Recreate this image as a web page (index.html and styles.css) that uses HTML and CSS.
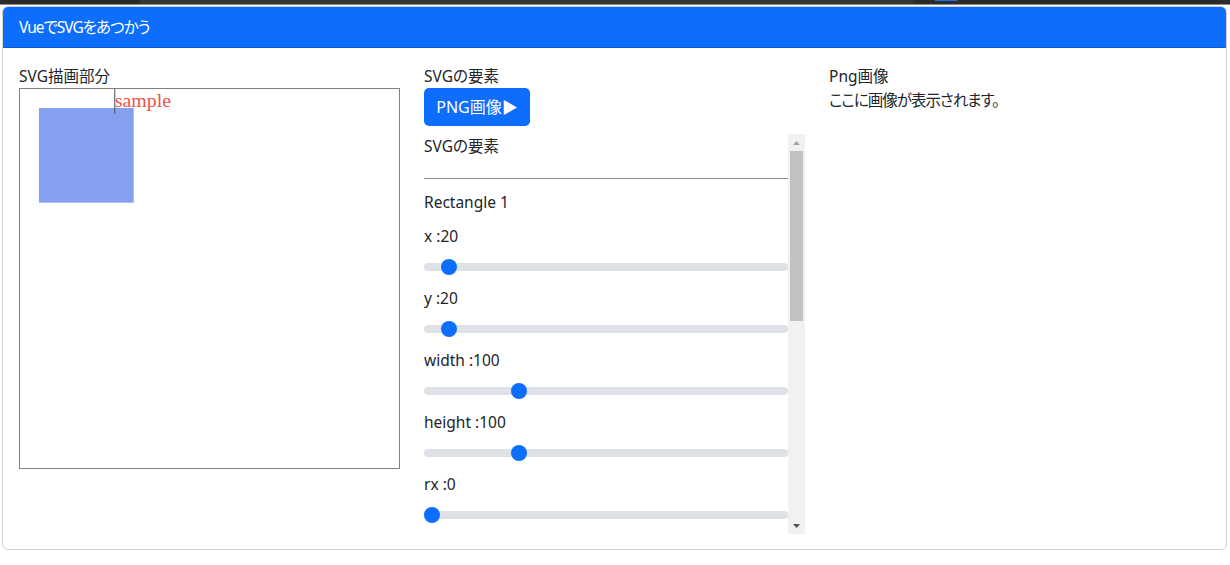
FILE: index.html
```html
<!DOCTYPE html>
<html lang="ja">
<head>
<meta charset="utf-8">
<title>VueでSVGをあつかう</title>
<link rel="stylesheet" href="styles.css">
</head>
<body>
<div class="topbar"><span class="tb-light"></span><span class="tb-blue"></span></div>
<div class="card">
  <div class="card-header">VueでSVGをあつかう</div>
  <div class="card-body">
    <div class="row">
      <div class="col">
        <div class="label">SVG描画部分</div>
        <svg class="canvas" viewBox="0 0 400 400" xmlns="http://www.w3.org/2000/svg">
          <rect x="20" y="20" width="100" height="100" fill="#86a0f0"/>
          <line x1="100" y1="0" x2="100" y2="26" stroke="#444" stroke-width="1"/>
          <text x="100" y="19" class="svgtext">sample</text>
        </svg>
      </div>
      <div class="col">
        <div class="label">SVGの要素</div>
        <button class="btn">PNG画像▶</button>
        <div class="scrollwrap">
          <div class="scroller">
            <div class="sc-title">SVGの要素</div>
            <hr class="sep">
            <div class="group-title">Rectangle 1</div>
            <div class="ctl"><div class="ctl-label">x :20</div><input class="range" type="range" min="0" max="400" value="20"></div>
            <div class="ctl"><div class="ctl-label">y :20</div><input class="range" type="range" min="0" max="400" value="20"></div>
            <div class="ctl"><div class="ctl-label">width :100</div><input class="range" type="range" min="0" max="400" value="100"></div>
            <div class="ctl"><div class="ctl-label">height :100</div><input class="range" type="range" min="0" max="400" value="100"></div>
            <div class="ctl"><div class="ctl-label">rx :0</div><input class="range" type="range" min="0" max="400" value="0"></div>
          </div>
          <div class="vscroll">
            <div class="sb-btn">
              <svg width="7" height="4" viewBox="0 0 7 4"><polygon points="0,4 7,4 3.5,0" fill="#a3a3a3"/></svg>
            </div>
            <div class="sb-track"><div class="sb-thumb"></div></div>
            <div class="sb-btn">
              <svg width="7" height="4" viewBox="0 0 7 4"><polygon points="0,0 7,0 3.5,4" fill="#505050"/></svg>
            </div>
          </div>
        </div>
      </div>
      <div class="col">
        <div class="label">Png画像</div>
        <div class="label kana">ここに画像が表示されます。</div>
      </div>
    </div>
  </div>
</div>
</body>
</html>
```
FILE: styles.css
```css
* { box-sizing: border-box; }
html, body { margin: 0; padding: 0; background: #fff; }
body {
  font-family: "Noto Sans", "Noto Sans CJK JP", sans-serif;
  font-feature-settings: "palt";
  font-size: 16px;
  line-height: 24px;
  color: #212529;
  width: 1230px;
  height: 565px;
  overflow: hidden;
}
.topbar {
  height: 5px;
  background: #2b2b2b;
  position: relative;
  border-bottom: 1px solid #8a8a8a;
  margin-bottom: 1px;
}
.tb-light {
  position: absolute; left: 140px; top: 0; width: 773px; height: 4px; background: #363636;
}
.tb-blue {
  position: absolute; left: 935px; top: 0; width: 22px; height: 1px; background: #1a73e8;
}
.card {
  margin: 0 3px 0 2px;
  border: 1px solid rgba(0,0,0,0.175);
  border-radius: 6px;
  overflow: hidden;
  height: 544px;
}
.card-header {
  background: #0d6efd;
  color: #fff;
  padding: 8px 16px;
  line-height: 24px;
  border-bottom: 1px solid rgba(0,0,0,0.175);
  font-size: 15.5px;
  letter-spacing: -1px;
}
.card-body { padding: 16px; }
.row { display: flex; margin: 0 -12px; }
.col { flex: 1 1 0; padding: 0 12px; min-width: 0; }
.label { line-height: 24px; font-size: 15.5px; }
.kana { letter-spacing: -1px; }
.canvas {
  display: block;
  width: 381px;
  height: 381px;
  border: 1px solid #808080;
}
.svgtext {
  font-family: "Liberation Serif", serif;
  font-size: 21px;
  fill: #ef5350;
}
.btn {
  display: block;
  font-family: inherit;
  font-feature-settings: "palt";
  font-size: 16px;
  line-height: 24px;
  padding: 7px 12px;
  color: #fff;
  background: #0d6efd;
  border: 0;
  border-radius: 5px;
  width: 106px;
  height: 38px;
  text-align: center;
  white-space: nowrap;
}
.scrollwrap {
  margin-top: 8px;
  height: 400px;
  display: flex;
}
.scroller {
  flex: 1 1 0;
  min-width: 0;
  overflow: hidden;
}
.vscroll {
  width: 17px;
  flex: 0 0 17px;
  background: #f1f1f1;
  display: flex;
  flex-direction: column;
}
.sb-btn {
  height: 17px;
  flex: 0 0 17px;
  display: flex;
  align-items: center;
  justify-content: center;
}
.sb-btn svg { display: block; }
.sb-track { flex: 1 1 auto; padding: 0 2px; }
.sb-thumb { height: 170px; background: #c1c1c1; }
.sc-title { line-height: 24px; font-size: 15.5px; margin-bottom: 20px; }
.sep {
  margin: 0 0 11px 0;
  border: 0;
  border-top: 1px solid #8c8c8c;
  height: 0;
}
.group-title { line-height: 24px; font-size: 15.5px; margin-bottom: 10px; }
.ctl { padding-bottom: 7px; }
.ctl-label { line-height: 24px; font-size: 15.5px; margin-bottom: 7px; }
.range {
  display: block;
  -webkit-appearance: none;
  appearance: none;
  width: 100%;
  height: 24px;
  margin: 0;
  padding: 0;
  background: transparent;
}
.range::-webkit-slider-runnable-track {
  height: 8px;
  background: #dee2e6;
  border-radius: 4px;
}
.range::-webkit-slider-thumb {
  -webkit-appearance: none;
  appearance: none;
  width: 16px;
  height: 16px;
  margin-top: -4px;
  border-radius: 50%;
  background: #0d6efd;
  border: 0;
}
```
